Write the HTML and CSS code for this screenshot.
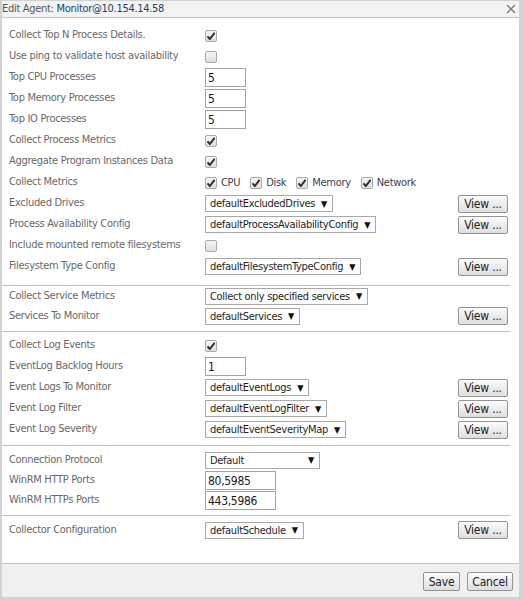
FILE: index.html
```html
<!DOCTYPE html>
<html>
<head>
<meta charset="utf-8">
<link rel="stylesheet" href="styles.css">
</head>
<body>
<div class="window">
  <div class="titlebar">
    <span class="t-pre">Edit Agent: </span><span class="t-name">Monitor@10.154.14.58</span>
    <svg class="close" width="10" height="10" viewBox="0 0 10 10"><path d="M1 1L9 9M9 1L1 9" stroke="#7a7a7a" stroke-width="1.3" fill="none"/></svg>
  </div>
  <div class="content">
    <div class="section s1">
      <div class="row"><div class="lbl">Collect Top N Process Details.</div><div class="ctl"><span class="cb on"></span></div></div>
      <div class="row"><div class="lbl">Use ping to validate host availability</div><div class="ctl"><span class="cb"></span></div></div>
      <div class="row"><div class="lbl">Top CPU Processes</div><div class="ctl"><span class="inp">5</span></div></div>
      <div class="row"><div class="lbl">Top Memory Processes</div><div class="ctl"><span class="inp">5</span></div></div>
      <div class="row"><div class="lbl">Top IO Processes</div><div class="ctl"><span class="inp">5</span></div></div>
      <div class="row"><div class="lbl">Collect Process Metrics</div><div class="ctl"><span class="cb on"></span></div></div>
      <div class="row"><div class="lbl">Aggregate Program Instances Data</div><div class="ctl"><span class="cb on"></span></div></div>
      <div class="row"><div class="lbl">Collect Metrics</div><div class="ctl metrics">
        <span class="opt"><span class="cb on"></span>CPU</span>
        <span class="opt"><span class="cb on"></span>Disk</span>
        <span class="opt"><span class="cb on"></span>Memory</span>
        <span class="opt"><span class="cb on"></span>Network</span>
      </div></div>
      <div class="row"><div class="lbl">Excluded Drives</div><div class="ctl"><span class="sel">defaultExcludedDrives<i class="arr">▼</i></span><span class="btn view">View ...</span></div></div>
      <div class="row"><div class="lbl">Process Availability Config</div><div class="ctl"><span class="sel">defaultProcessAvailabilityConfig<i class="arr">▼</i></span><span class="btn view">View ...</span></div></div>
      <div class="row"><div class="lbl">Include mounted remote filesystems</div><div class="ctl"><span class="cb"></span></div></div>
      <div class="row"><div class="lbl">Filesystem Type Config</div><div class="ctl"><span class="sel">defaultFilesystemTypeConfig<i class="arr">▼</i></span><span class="btn view">View ...</span></div></div>
    </div>
    <div class="sep"></div>
    <div class="section s2">
      <div class="row tight"><div class="lbl">Collect Service Metrics</div><div class="ctl"><span class="sel">Collect only specified services<i class="arr">▼</i></span></div></div>
      <div class="row tight"><div class="lbl">Services To Monitor</div><div class="ctl"><span class="sel">defaultServices<i class="arr">▼</i></span><span class="btn view">View ...</span></div></div>
    </div>
    <div class="sep"></div>
    <div class="section s3">
      <div class="row"><div class="lbl">Collect Log Events</div><div class="ctl"><span class="cb on"></span></div></div>
      <div class="row"><div class="lbl">EventLog Backlog Hours</div><div class="ctl"><span class="inp">1</span></div></div>
      <div class="row"><div class="lbl">Event Logs To Monitor</div><div class="ctl"><span class="sel">defaultEventLogs<i class="arr">▼</i></span><span class="btn view">View ...</span></div></div>
      <div class="row"><div class="lbl">Event Log Filter</div><div class="ctl"><span class="sel">defaultEventLogFilter<i class="arr">▼</i></span><span class="btn view">View ...</span></div></div>
      <div class="row"><div class="lbl">Event Log Severity</div><div class="ctl"><span class="sel">defaultEventSeverityMap<i class="arr">▼</i></span><span class="btn view">View ...</span></div></div>
    </div>
    <div class="sep"></div>
    <div class="section s4">
      <div class="row tight"><div class="lbl">Connection Protocol</div><div class="ctl"><span class="sel wide">Default<i class="arr">▼</i></span></div></div>
      <div class="row tight"><div class="lbl">WinRM HTTP Ports</div><div class="ctl"><span class="inp long">80,5985</span></div></div>
      <div class="row tight"><div class="lbl">WinRM HTTPs Ports</div><div class="ctl"><span class="inp long">443,5986</span></div></div>
    </div>
    <div class="sep"></div>
    <div class="section s5">
      <div class="row tight"><div class="lbl">Collector Configuration</div><div class="ctl"><span class="sel">defaultSchedule<i class="arr">▼</i></span><span class="btn view">View ...</span></div></div>
    </div>
  </div>
  <div class="footer">
    <span class="btn save">Save</span>
    <span class="btn cancel">Cancel</span>
  </div>
</div>
</body>
</html>
```
FILE: styles.css
```css
html, body {
  margin: 0;
  padding: 0;
  background: #d4d4d4;
}
body {
  font-family: "DejaVu Sans Condensed", "DejaVu Sans", sans-serif;
  font-size: 11px;
  letter-spacing: -0.3px;
}
.window {
  width: 523px;
  height: 599px;
  box-sizing: border-box;
  border-style: solid;
  border-color: #d2d2d2;
  border-width: 1px 4px 2px 2px;
  background: #ffffff;
  display: flex;
  flex-direction: column;
}
.titlebar {
  height: 16px;
  border-bottom: 1px solid #c6c6c6;
  background: #f3f3f3;
  display: flex;
  align-items: center;
  line-height: 16px;
  white-space: pre;
}
.t-pre { color: #555555; }
.t-name { color: #1d3f66; }
.close { margin-left: auto; margin-right: 3px; }
.content {
  flex: 1;
  padding: 7px 9px 0 0;
}
.s1 { padding-bottom: 3px; }
.s3 { padding-top: 3px; }
.s4 { padding-top: 4px; }
.s5 { padding-top: 4px; }
.row {
  height: 21px;
  display: flex;
  align-items: center;
}
.row.tight { height: 20px; }
.lbl {
  width: 196px;
  padding-left: 7px;
  color: #686868;
  white-space: nowrap;
  position: relative;
  top: -1px;
}
.ctl {
  flex: 1;
  display: flex;
  align-items: center;
}
.cb {
  display: inline-block;
  width: 10px;
  height: 10px;
  border: 1px solid #a9a9a9;
  border-radius: 2px;
  background: linear-gradient(#f4f4f4, #dedede);
  position: relative;
}
.cb.on::after {
  content: "";
  position: absolute;
  left: 1px;
  top: 1px;
  width: 8px;
  height: 8px;
  background: url("data:image/svg+xml;utf8,<svg xmlns='http://www.w3.org/2000/svg' viewBox='0 0 8 8'><path d='M0.5 4.3L2.8 7L7.6 0.8' stroke='%23303030' stroke-width='2' fill='none'/></svg>") no-repeat;
}
.metrics .opt {
  display: inline-flex;
  align-items: center;
  color: #3a4050;
  margin-right: 10px;
}
.metrics .opt .cb { margin-right: 4px; }
.inp {
  display: inline-block;
  width: 37px;
  height: 17px;
  line-height: 18px;
  border: 1px solid #a2a2a2;
  padding-left: 2px;
  color: #1a1a1a;
  font-size: 12px;
}
.inp.long { width: 67px; }
.sel {
  display: inline-flex;
  align-items: center;
  height: 15px;
  border: 1px solid #a8a8a8;
  padding: 0 5px 0 4px;
  color: #1e1e1e;
  font-size: 11px;
  white-space: nowrap;
}
.sel.wide { width: 104px; }
.sel.wide .arr { margin-left: auto; }
.arr {
  font-style: normal;
  font-size: 9px;
  margin-left: 6px;
  color: #111;
}
.btn {
  display: inline-flex;
  align-items: center;
  justify-content: center;
  box-sizing: border-box;
  height: 18px;
  border: 1px solid #939393;
  border-radius: 2px;
  background: linear-gradient(#fbfbfb, #dedede);
  color: #222222;
  font-size: 12px;
  letter-spacing: -0.2px;
}
.view {
  width: 50px;
  margin-left: auto;
  margin-right: 2px;
}
.sep {
  height: 0;
  border-top: 1px solid #bdbdbd;
  margin-top: 5px;
}
.footer {
  height: 33px;
  border-top: 1px solid #c2c2c2;
  background: #efefef;
  display: flex;
  align-items: center;
  justify-content: flex-end;
  padding-right: 6px;
  gap: 7px;
}
.footer .btn { height: 19px; margin-top: 2px; }
.save { width: 37px; }
.cancel { width: 46px; }
```
